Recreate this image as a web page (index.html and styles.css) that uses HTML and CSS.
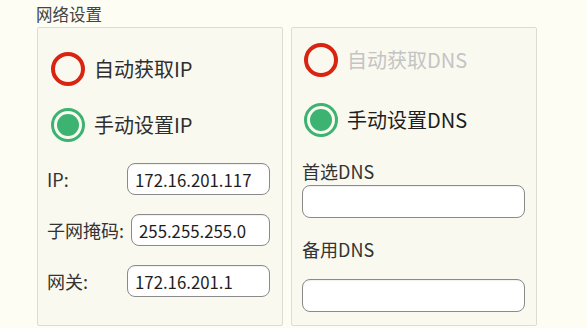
FILE: index.html
```html
<!DOCTYPE html>
<html lang="zh-CN">
<head>
<meta charset="utf-8">
<link rel="stylesheet" href="styles.css">
</head>
<body>
<div class="page">
  <div class="title">网络设置</div>
  <div class="panels">
    <div class="panel panel-left">
      <div class="radio-row first">
        <span class="radio off"></span>
        <span class="radio-label">自动获取IP</span>
      </div>
      <div class="radio-row second">
        <span class="radio on"><span class="dot"></span></span>
        <span class="radio-label">手动设置IP</span>
      </div>
      <div class="field-row first-field">
        <span class="field-label">IP:</span>
        <input class="entry" type="text" value="172.16.201.117">
      </div>
      <div class="field-row">
        <span class="field-label">子网掩码:</span>
        <input class="entry" type="text" value="255.255.255.0">
      </div>
      <div class="field-row">
        <span class="field-label">网关:</span>
        <input class="entry" type="text" value="172.16.201.1">
      </div>
    </div>
    <div class="panel panel-right">
      <div class="radio-row first">
        <span class="radio off"></span>
        <span class="radio-label disabled">自动获取DNS</span>
      </div>
      <div class="radio-row second">
        <span class="radio on"><span class="dot"></span></span>
        <span class="radio-label dark">手动设置DNS</span>
      </div>
      <div class="dns-label first-dns">首选DNS</div>
      <input class="entry wide" type="text" value="">
      <div class="dns-label second-dns">备用DNS</div>
      <input class="entry wide last" type="text" value="">
    </div>
  </div>
</div>
</body>
</html>
```

FILE: styles.css
```css
html, body {
  margin: 0;
  padding: 0;
  background: #fdfdf3;
  font-family: "Noto Sans CJK SC", "Noto Sans", sans-serif;
  color: #333;
}

.page {
  padding: 2px 0 0 36px;
}

.title {
  font-size: 16.5px;
  line-height: 24px;
  color: #444;
  margin-bottom: 1px;
}

.panels {
  display: flex;
  gap: 8px;
  margin-left: 1px;
}

.panel {
  box-sizing: border-box;
  width: 246px;
  height: 299px;
  border: 1px solid #dcdcd2;
  border-radius: 2px;
  background: #f9f9f0;
  display: flex;
  flex-direction: column;
}

.panel-left {
  padding: 0 12px 0 9px;
}

.panel-right {
  padding: 0 11px 0 10px;
}

.radio-row {
  display: flex;
  align-items: center;
  gap: 9px;
}

.panel-left .radio-row { margin-left: 4px; }
.panel-right .radio-row { margin-left: 2px; }

.panel-left .radio-row.first { margin-top: 24px; }
.panel-left .radio-row.second { margin-top: 22px; }
.panel-right .radio-row.first { margin-top: 15px; }
.panel-right .radio-row.second { margin-top: 26px; }

.radio {
  box-sizing: border-box;
  width: 34px;
  height: 34px;
  border-radius: 50%;
  flex: none;
  display: flex;
  align-items: center;
  justify-content: center;
}

.radio.off {
  border: 4px solid #d92411;
}

.radio.on {
  border: 3px solid #3cb371;
}

.radio .dot {
  width: 22px;
  height: 22px;
  border-radius: 50%;
  background: #3cb371;
}

.radio-label {
  font-size: 20px;
  line-height: 28px;
  color: #2e2e2e;
}

.radio-label.disabled { color: #c4c4c4; }
.radio-label.dark { color: #1e1e1e; }

.field-row {
  display: flex;
  align-items: center;
  gap: 7px;
  margin-top: 19px;
}

.field-row.first-field { margin-top: 21px; }

.field-label {
  min-width: 73px;
  font-size: 18px;
  color: #333;
  white-space: nowrap;
}

.entry {
  box-sizing: border-box;
  flex: 1;
  min-width: 0;
  height: 32px;
  margin: 0;
  padding: 2px 6px 0 7px;
  border: 1px solid #8a8a8a;
  border-radius: 8px;
  background: #fff;
  font-family: inherit;
  font-size: 16.8px;
  color: #1e1e1e;
  outline: none;
  box-shadow: inset 0 1px 1px rgba(0, 0, 0, 0.06);
}

.entry.wide {
  width: 100%;
  flex: none;
  height: 33px;
}

.dns-label {
  font-size: 18px;
  line-height: 24px;
  color: #333;
}

.dns-label.first-dns { margin-top: 22px; margin-bottom: 2px; }
.dns-label.second-dns { margin-top: 19px; margin-bottom: 18px; }
```
